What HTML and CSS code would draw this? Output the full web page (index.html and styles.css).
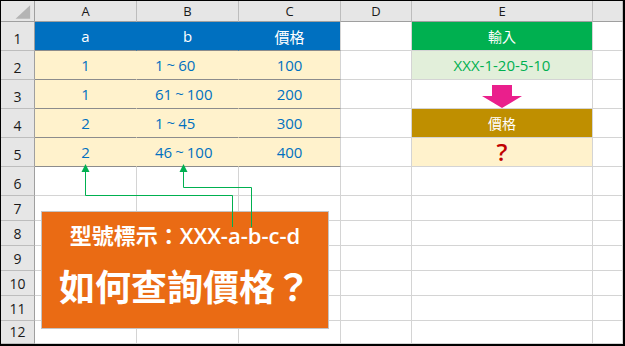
FILE: index.html
```html
<!DOCTYPE html>
<html lang="zh-Hant">
<head>
<meta charset="utf-8">
<title>型號價格查詢</title>
<link rel="stylesheet" href="styles.css">
</head>
<body>
<div class="sheet">
  <div class="c corner"><svg width="34" height="21" viewBox="0 0 34 21"><polygon points="15,18 30,18 30,4" fill="#b4b4b4"/></svg></div>
  <div class="c ch">A</div><div class="c ch">B</div><div class="c ch">C</div><div class="c ch">D</div><div class="c ch">E</div><div class="c ch"></div>

  <div class="c rh">1</div>
  <div class="c blue">a</div><div class="c blue">b</div><div class="c blue last">價格</div>
  <div class="c"></div><div class="c green">輸入</div><div class="c"></div>

  <div class="c rh">2</div>
  <div class="c yel">1</div><div class="c yel left">1<span class="t">~</span>60</div><div class="c yel last">100</div>
  <div class="c"></div><div class="c lgreen">XXX-1-20-5-10</div><div class="c"></div>

  <div class="c rh">3</div>
  <div class="c yel">1</div><div class="c yel left">61<span class="t">~</span>100</div><div class="c yel last">200</div>
  <div class="c"></div>
  <div class="c arrowcell"><svg width="42" height="24" viewBox="0 0 42 24"><polygon points="11,0 31,0 31,11 41,11 21,23 1,11 11,11" fill="#ea1f8c"/></svg></div>
  <div class="c"></div>

  <div class="c rh">4</div>
  <div class="c yel">2</div><div class="c yel left">1<span class="t">~</span>45</div><div class="c yel last">300</div>
  <div class="c"></div><div class="c gold">價格</div><div class="c"></div>

  <div class="c rh">5</div>
  <div class="c yel">2</div><div class="c yel left">46<span class="t">~</span>100</div><div class="c yel last">400</div>
  <div class="c"></div><div class="c yel2"><span class="q">?</span></div><div class="c"></div>

  <div class="c rh">6</div><div class="c"></div><div class="c"></div><div class="c"></div><div class="c"></div><div class="c"></div><div class="c"></div>
  <div class="c rh">7</div><div class="c"></div><div class="c"></div><div class="c"></div><div class="c"></div><div class="c"></div><div class="c"></div>
  <div class="c rh">8</div><div class="c"></div><div class="c"></div><div class="c"></div><div class="c"></div><div class="c"></div><div class="c"></div>
  <div class="c rh">9</div><div class="c"></div><div class="c"></div><div class="c"></div><div class="c"></div><div class="c"></div><div class="c"></div>
  <div class="c rh">10</div><div class="c"></div><div class="c"></div><div class="c"></div><div class="c"></div><div class="c"></div><div class="c"></div>
  <div class="c rh">11</div><div class="c"></div><div class="c"></div><div class="c"></div><div class="c"></div><div class="c"></div><div class="c"></div>
  <div class="c rh">12</div><div class="c"></div><div class="c"></div><div class="c"></div><div class="c"></div><div class="c"></div><div class="c"></div>

  <div class="callout">
    <div class="line1">型號標示：XXX-a-b-c-d</div>
    <div class="line2">如何查詢價格？</div>
  </div>

  <svg class="links" width="625" height="346" viewBox="0 0 625 346">
    <g fill="none" stroke="#00b050" stroke-width="1">
      <polyline points="85.5,170 85.5,195.5 232.5,195.5 232.5,227"/>
      <polyline points="183.5,170 183.5,187.5 251.5,187.5 251.5,227"/>
    </g>
    <g fill="#00b050">
      <polygon points="85.5,164 89.5,172 81.5,172"/>
      <polygon points="183.5,164 187.5,172 179.5,172"/>
    </g>
  </svg>
</div>
</body>
</html>
```
FILE: styles.css
```css
html, body {
  margin: 0;
  padding: 0;
  background: #ffffff;
}

.sheet {
  position: relative;
  width: 625px;
  height: 346px;
  box-sizing: border-box;
  border: 1px solid #000;
  border-right-width: 2px;
  border-bottom-width: 2px;
  display: grid;
  grid-template-columns: 34px 102px 102px 102px 71px 181px 30px;
  grid-template-rows: 21px repeat(6, 29px) repeat(5, 25px) 23px;
  overflow: hidden;
  font-family: "Open Sans", "Noto Sans CJK TC", sans-serif;
  background: #fff;
}

.c {
  box-sizing: border-box;
  border-right: 1px solid #d4d4d4;
  border-bottom: 1px solid #d4d4d4;
  display: flex;
  align-items: center;
  justify-content: center;
  font-size: 15px;
  color: #0070c0;
  white-space: nowrap;
}

.left {
  justify-content: flex-start;
  padding-left: 18px;
}

.t {
  margin: 0 3px;
  position: relative;
  top: -1px;
}

.corner {
  background: #e6e6e6;
  border-right-color: #9f9f9f;
  border-bottom-color: #9f9f9f;
  align-items: stretch;
  justify-content: stretch;
}

.corner svg {
  display: block;
}

.ch {
  background: #e6e6e6;
  color: #1a1a1a;
  font-size: 13px;
  border-right-color: #bdbdbd;
  border-bottom-color: #9f9f9f;
  padding-bottom: 1px;
}

.rh {
  background: #e6e6e6;
  color: #1a1a1a;
  font-size: 14px;
  border-right-color: #9f9f9f;
  border-bottom-color: #bdbdbd;
  align-items: flex-end;
  padding-bottom: 2px;
}

.blue {
  background: #0070c0;
  color: #fff;
  border-right-color: #0070c0;
  border-bottom-color: #8c8c8c;
}

.yel {
  background: #fff2cc;
  border-right-color: #fff2cc;
  border-bottom-color: #8c8c8c;
}

.last {
  border-right-color: #d4d4d4;
}

.green {
  background: #00b050;
  color: #fff;
  font-size: 14px;
}

.lgreen {
  background: #e2efda;
  color: #00b050;
}

.arrowcell {
  align-items: flex-end;
}

.arrowcell svg {
  display: block;
  margin-bottom: -1px;
  position: relative;
  z-index: 1;
}

.gold {
  background: #bf8f00;
  color: #fff;
  font-size: 14px;
}

.yel2 {
  background: #fff2cc;
}

.q {
  color: #c00000;
  font-size: 24px;
  font-weight: 600;
  line-height: 1;
}

.callout {
  position: absolute;
  left: 40px;
  top: 210px;
  width: 288px;
  height: 118px;
  box-sizing: border-box;
  background: #ea6b14;
  border: 1px solid #c4c4c4;
  color: #fff;
  font-weight: 700;
  display: flex;
  flex-direction: column;
  align-items: center;
  padding-top: 12px;
  gap: 21px;
}

.line1 {
  font-family: "Open Sans", "Noto Sans CJK TC", sans-serif;
  font-size: 22px;
  line-height: 22px;
  font-weight: 600;
  white-space: nowrap;
}

.line2 {
  font-family: "Noto Sans CJK TC", sans-serif;
  font-size: 36px;
  line-height: 36px;
  white-space: nowrap;
}

.links {
  position: absolute;
  left: -1px;
  top: -1px;
  pointer-events: none;
}
```
